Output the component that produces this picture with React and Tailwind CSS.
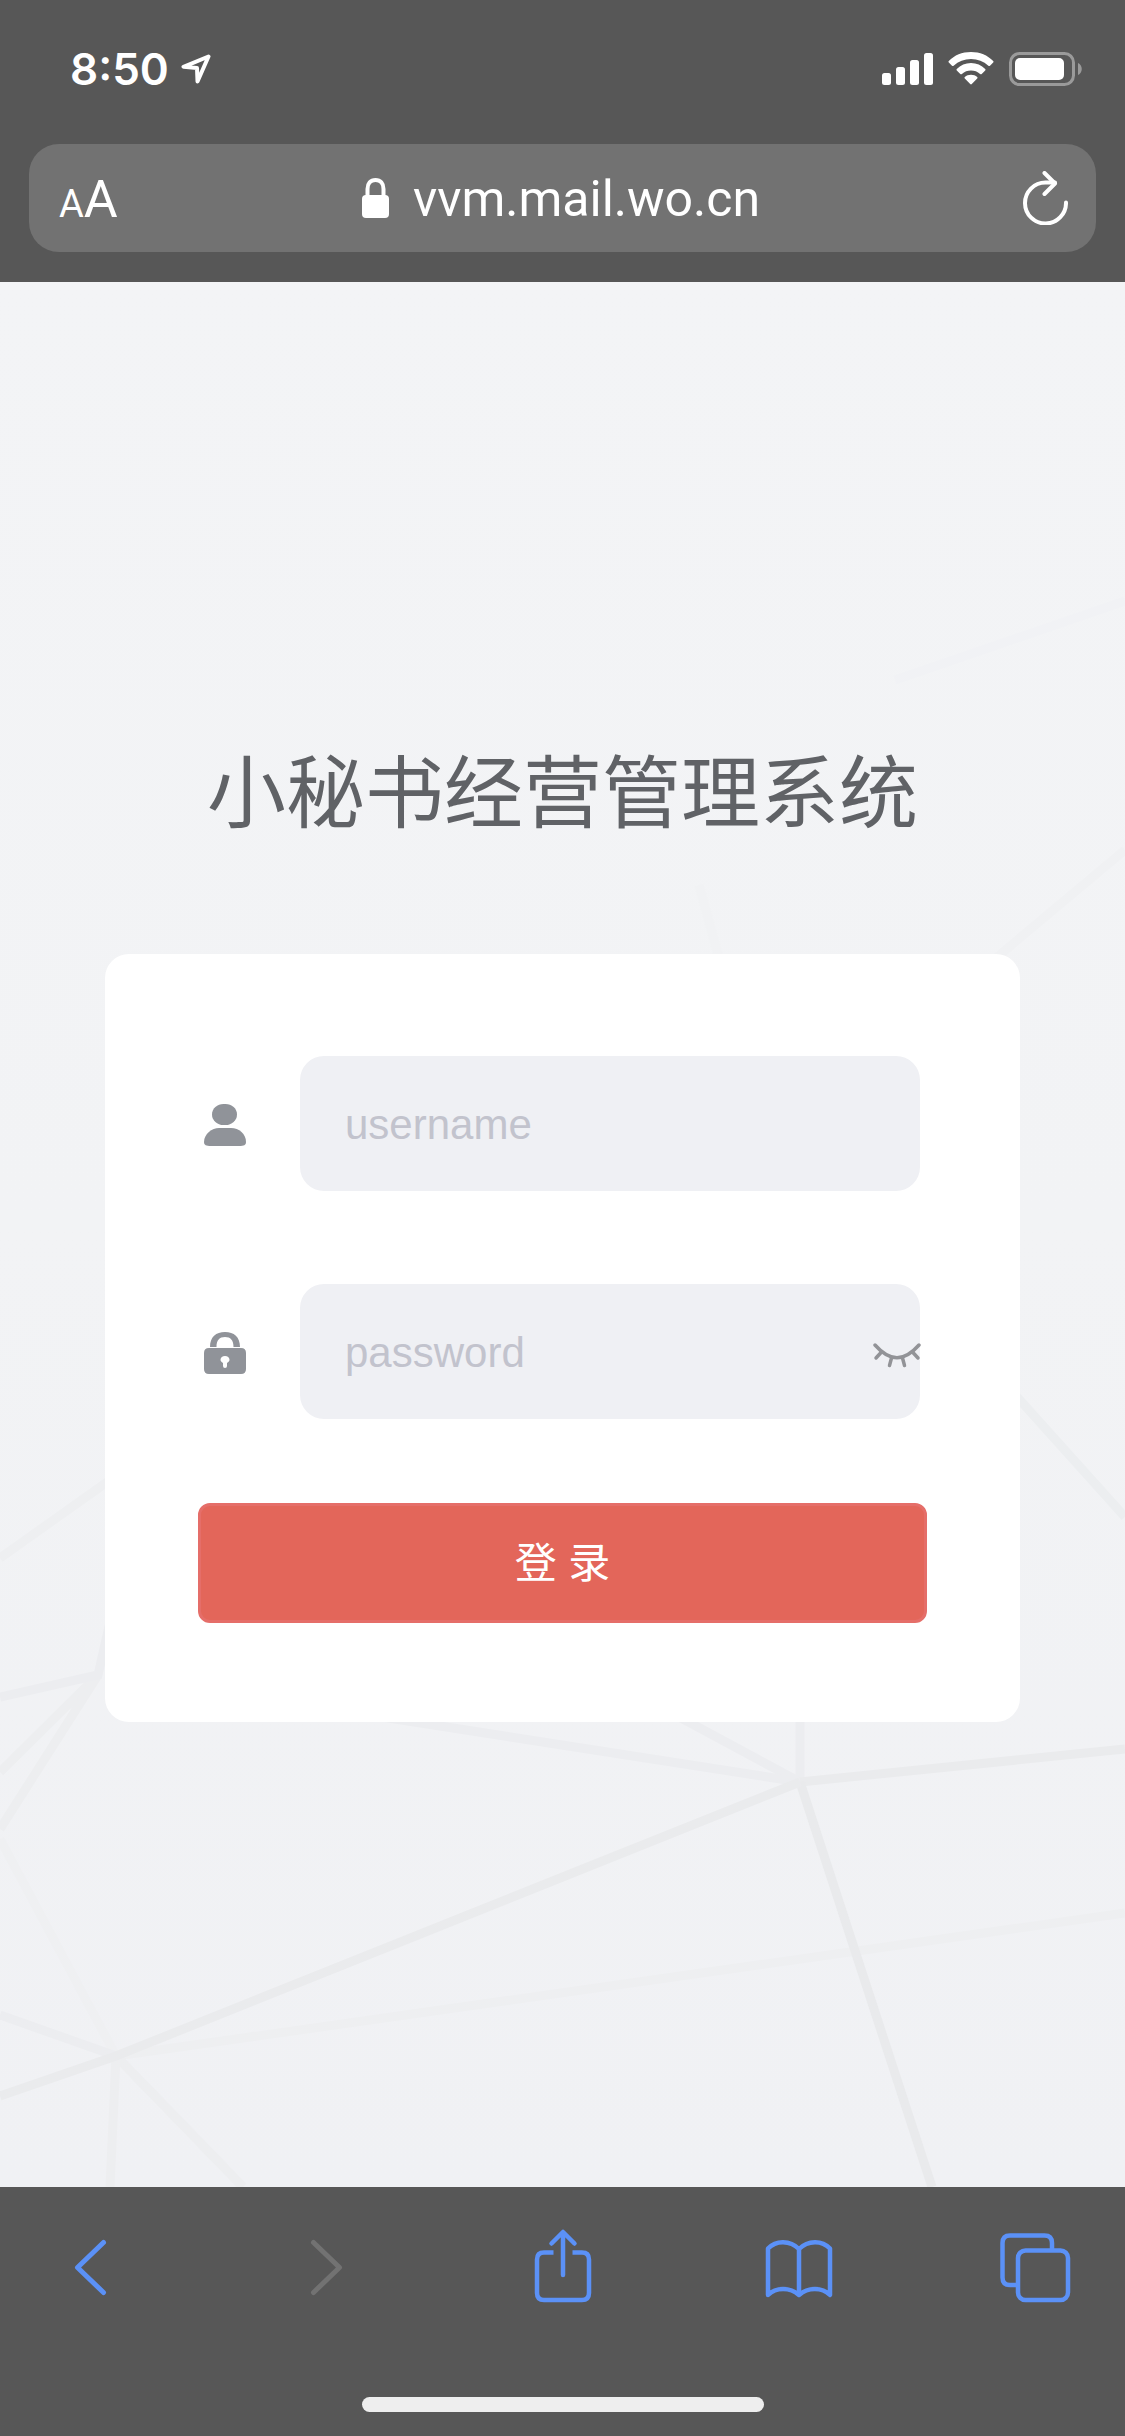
import { useState } from 'react';

// faint lines first so the stronger ones stay on top
const MESH_LINES = [
  { d: 'M116 1774 L1125 1631', color: '#eeeff1' },
  { d: 'M116 1774 L0 1557', color: '#eff0f2' },
  { d: 'M895 398 L1125 319', color: '#f1f2f5' },
  { d: 'M990 681 L1125 568', color: '#f0f1f3' },
  { d: 'M699 603 L720 680', color: '#f1f2f4' },
  { d: 'M0 1276 L110 1198', color: '#eeeff1' },
  { d: 'M1010 1107 L1125 1235', color: '#eceef0' },
  { d: 'M98 1393 L0 1490', color: '#edeef0' },
  { d: 'M98 1393 L0 1547', color: '#edeef0' },
  { d: 'M0 1415 L98 1393 L110 1340', color: '#ecedf0' },
  { d: 'M116 1774 L110 1905', color: '#edeef0' },
  { d: 'M116 1774 L243 1905', color: '#edeef0' },
  { d: 'M116 1774 L0 1733', color: '#ecedf0' },
  { d: 'M800 1500 L800 1430', color: '#ecedf0' },
  { d: 'M800 1500 L670 1430', color: '#ecedf0' },
  { d: 'M800 1500 L350 1430', color: '#ecedf0' },
  { d: 'M800 1500 L1125 1467', color: '#eaebed' },
  { d: 'M800 1500 L932 1905', color: '#e9eaec' },
  { d: 'M0 1814 L116 1774 L800 1500', color: '#eaebed' },
];

function MeshBackground() {
  return (
    <svg
      className="absolute inset-0 h-full w-full"
      viewBox="0 0 1125 1905"
      preserveAspectRatio="none"
      fill="none"
      strokeWidth="9"
      aria-hidden="true"
    >
      {MESH_LINES.map((line) => (
        <path key={line.d} d={line.d} stroke={line.color} />
      ))}
    </svg>
  );
}

function StatusBar() {
  return (
    <div className="flex h-[138px] items-center justify-between pr-[43px] pl-[70px]">
      <div className="flex items-center gap-3">
        <span className="text-[44px] leading-[48px] font-semibold">8:50</span>
        <svg width="30" height="30" viewBox="0 0 30 30" fill="none" stroke="currentColor" strokeWidth="4" strokeLinejoin="round">
          <path d="M27.500 2.500 L2.500 12.800 L16 14 L16.500 27.500 Z" />
        </svg>
      </div>
      <div className="flex items-center gap-[15px]">
        <svg width="51" height="34" viewBox="0 0 51 34" fill="currentColor">
          <rect x="0" y="21" width="9" height="12" rx="2.500" />
          <rect x="14" y="15" width="9" height="18" rx="2.500" />
          <rect x="28" y="8" width="9" height="25" rx="2.500" />
          <rect x="42" y="1" width="9" height="32" rx="2.500" />
        </svg>
        <svg width="46" height="34" viewBox="0 0 46 34" fill="currentColor">
          <path d="M23 0 C32 0 39.500 3.300 45.200 8.900 Q46 9.700 45.200 10.500 L42 13.700 Q41.200 14.500 40.400 13.700 C35.500 9.300 29.700 7 23 7 C16.300 7 10.500 9.300 5.600 13.700 Q4.800 14.500 4 13.700 L0.800 10.500 Q0 9.700 0.800 8.900 C6.500 3.300 14 0 23 0 Z" />
          <path d="M23 11 C28.600 11 33.400 13.200 37.200 16.900 Q38 17.700 37.200 18.500 L33.700 21.900 Q32.900 22.700 32.100 21.900 C29.500 19.600 26.500 18.500 23 18.500 C19.500 18.500 16.500 19.600 13.900 21.900 Q13.100 22.700 12.300 21.900 L8.800 18.500 Q8 17.700 8.800 16.900 C12.600 13.200 17.400 11 23 11 Z" />
          <path d="M23 22.700 C25.500 22.700 27.600 23.500 29.200 25 Q30 25.800 29.200 26.600 L23.800 32 Q23 32.800 22.200 32 L16.800 26.600 Q16 25.800 16.800 25 C18.400 23.500 20.500 22.700 23 22.700 Z" />
        </svg>
        <svg width="73" height="34" viewBox="0 0 73 34">
          <rect x="1.500" y="1.500" width="63" height="31" rx="9" fill="none" stroke="#9a9a9a" strokeWidth="3" />
          <rect x="6" y="6" width="49" height="22" rx="5" fill="#fff" />
          <path d="M69 11 C74 13 74 21 69 23 Z" fill="#9a9a9a" />
        </svg>
      </div>
    </div>
  );
}

function AddressBar() {
  return (
    <div className="mx-[29px] mt-1.5 flex h-[108px] items-center justify-between rounded-[30px] bg-[#727272] pr-7 pl-[30px] font-[Roboto,sans-serif]">
      <button type="button" aria-label="Text size" className="flex w-14 items-baseline pt-2 leading-[60px]">
        <span className="text-[38px]">A</span>
        <span className="text-[52px]">A</span>
      </button>
      <div className="flex items-center gap-6">
        <svg width="27" height="40" viewBox="0 0 27 40" fill="none">
          <path d="M5.500 18 V11 C5.500 5.500 8.500 2 13.500 2 C18.500 2 21.500 5.500 21.500 11 V18" stroke="currentColor" strokeWidth="4" />
          <rect x="0" y="17" width="27" height="23" rx="4" fill="currentColor" />
        </svg>
        <span className="pt-0.5 text-[50px] leading-[60px]">vvm.mail.wo.cn</span>
      </div>
      <button type="button" aria-label="Reload" className="flex pl-4">
        <svg width="45" height="54" viewBox="0 0 45 54" fill="none" stroke="currentColor" strokeWidth="4" strokeLinecap="round" strokeLinejoin="round">
          <path d="M43 31.500 A20.500 20.500 0 1 1 22.500 11.500 H32" />
          <path d="M21.500 2 L32 12.500 L21.500 23" />
        </svg>
      </button>
    </div>
  );
}

function UserIcon() {
  return (
    <svg width="42" height="42" viewBox="0 0 42 42" fill="#909399">
      <rect x="8" y="0" width="25" height="21" rx="11.500" ry="10.500" />
      <path d="M0 38 C0 30 8 24 15 24 H27 C35 24 42 30 42 38 C42 41 40 42 35 42 H7 C2 42 0 41 0 38 Z" />
    </svg>
  );
}

function PasswordIcon() {
  return (
    <svg width="42" height="42" viewBox="0 0 42 42" fill="#909399">
      <path d="M6 15 C6 5 12 0 21 0 C30 0 36 5 36 15 H29.500 C29.500 8 26.500 5 21 5 C15.500 5 12.500 8 12.500 15 Z" />
      <path
        fillRule="evenodd"
        d="M5 16 H37 Q42 16 42 21 V37 Q42 42 37 42 H5 Q0 42 0 37 V21 Q0 16 5 16 Z M21 24 C18.500 24 16.500 25.700 16.500 27.800 C16.500 29.200 17.500 30 19 31 V34 Q19 36 21 36 Q23 36 23 34 V31 C24.500 30 25.500 29.200 25.500 27.800 C25.500 25.700 23.500 24 21 24 Z"
      />
    </svg>
  );
}

function Field({ id, label, icon, type, children }) {
  return (
    <div className="flex items-center gap-[54px] pr-[7px] pl-1.5">
      <label htmlFor={id} aria-label={label} className="shrink-0 pt-[3px]">
        {icon}
      </label>
      <div className="relative flex-1">
        <input
          id={id}
          name={id}
          type={type}
          placeholder={label}
          className="h-[135px] w-full rounded-3xl bg-[#eff0f4] px-[45px] pt-0.5 font-['Liberation_Sans',Arial,sans-serif] text-[42px] text-[#606266] placeholder:text-[#c2c3cd] focus:outline-none"
        />
        {children}
      </div>
    </div>
  );
}

function LoginForm() {
  const [visible, setVisible] = useState(false);

  return (
    <form
      className="mx-[105px] mt-[118px] flex flex-col rounded-3xl bg-white px-[93px] pt-[102px] pb-[99px]"
      onSubmit={(e) => e.preventDefault()}
    >
      <div className="flex flex-col gap-[93px]">
        <Field id="username" label="username" type="text" icon={<UserIcon />} />
        <Field id="password" label="password" type={visible ? 'text' : 'password'} icon={<PasswordIcon />}>
          <button
            type="button"
            aria-label="Toggle password visibility"
            onClick={() => setVisible(!visible)}
            className="absolute inset-y-0 -right-px flex w-12 items-center"
          >
            <svg width="48" height="48" viewBox="0 0 48 48" fill="none" stroke="#929397" strokeWidth="3.500" strokeLinecap="round">
              <path d="M2 17 C17 34 31 34 46 17" />
              <path d="M8.500 24 L3 30 M18.500 30 L16.500 37.500 M29.500 30 L31.500 37.500 M39.500 24 L45 30" />
            </svg>
          </button>
        </Field>
      </div>
      <button
        type="submit"
        className="mt-[84px] h-[120px] rounded-xl border-3 border-[#e56e69] bg-[#e3665a] font-['Liberation_Sans','Noto_Sans_CJK_SC',sans-serif] text-[42px] text-white"
      >
        登 录
      </button>
    </form>
  );
}

function Toolbar() {
  return (
    <footer className="flex h-[249px] flex-col items-center justify-between bg-[#575757] pb-6">
      <nav className="flex w-full justify-between px-[45px] pt-9 text-[#5b91f7]">
        <button type="button" aria-label="Back" className="flex size-[90px] items-center justify-center">
          <svg width="90" height="90" viewBox="0 0 90 90" fill="none" stroke="currentColor" strokeWidth="5" strokeLinecap="round" strokeLinejoin="round">
            <path d="M58.500 19.500 L32.500 44.500 L58.500 69.500" />
          </svg>
        </button>
        <button type="button" aria-label="Forward" disabled className="flex size-[90px] items-center justify-center text-[#727272]">
          <svg width="90" height="90" viewBox="0 0 90 90" fill="none" stroke="currentColor" strokeWidth="5" strokeLinecap="round" strokeLinejoin="round">
            <path d="M32.500 19.500 L58.500 44.500 L32.500 69.500" />
          </svg>
        </button>
        <button type="button" aria-label="Share" className="flex size-[90px] items-center justify-center">
          <svg width="90" height="90" viewBox="0 0 90 90" fill="none" stroke="currentColor" strokeWidth="4.500" strokeLinejoin="round">
            <path d="M35.500 29.500 H26 Q19 29.500 19 36.500 V70 Q19 77 26 77 H64 Q71 77 71 70 V36.500 Q71 29.500 64 29.500 H54.500" />
            <path d="M45 52 V9.500 M33.500 20.500 L45 9 L56.500 20.500" strokeLinecap="round" />
          </svg>
        </button>
        <button type="button" aria-label="Bookmarks" className="flex size-[90px] items-center justify-center">
          <svg width="90" height="90" viewBox="0 0 90 90" fill="none" stroke="currentColor" strokeWidth="4.500" strokeLinecap="round" strokeLinejoin="round">
            <path d="M45 26 C36 17 22 17 14 25.500 V72 C22 64 36 64 45 72 C54 64 68 64 76 72 V25.500 C68 17 54 17 45 26 Z M45 26 V72" />
          </svg>
        </button>
        <button type="button" aria-label="Tabs" className="flex size-[90px] items-center justify-center">
          <svg width="90" height="90" viewBox="0 0 90 90" fill="none" stroke="currentColor" strokeWidth="4.500">
            <path d="M62 28 V20 Q62 12.500 54.500 12.500 H20 Q12.500 12.500 12.500 20 V54.500 Q12.500 62 20 62 H27" />
            <rect x="28" y="27.500" width="50" height="49.500" rx="7.500" />
          </svg>
        </button>
      </nav>
      <div className="h-[15px] w-[402px] rounded-full bg-[#eeeeee]" />
    </footer>
  );
}

export default function App() {
  return (
    <div className="flex min-h-screen flex-col bg-[#575757] font-[Inter,'Noto_Sans_CJK_SC',sans-serif]">
      <header className="pb-[30px] text-white">
        <StatusBar />
        <AddressBar />
      </header>
      <main className="relative flex-1 bg-linear-to-b from-[#f3f4f6] via-[#f2f3f5] to-[#f0f1f4]">
        <MeshBackground />
        <div className="relative pt-[458px]">
          <h1 className="text-center font-['Noto_Sans_CJK_SC',sans-serif] text-[79px] leading-[96px] text-[#606266]">
            小秘书经营管理系统
          </h1>
          <LoginForm />
        </div>
      </main>
      <Toolbar />
    </div>
  );
}
